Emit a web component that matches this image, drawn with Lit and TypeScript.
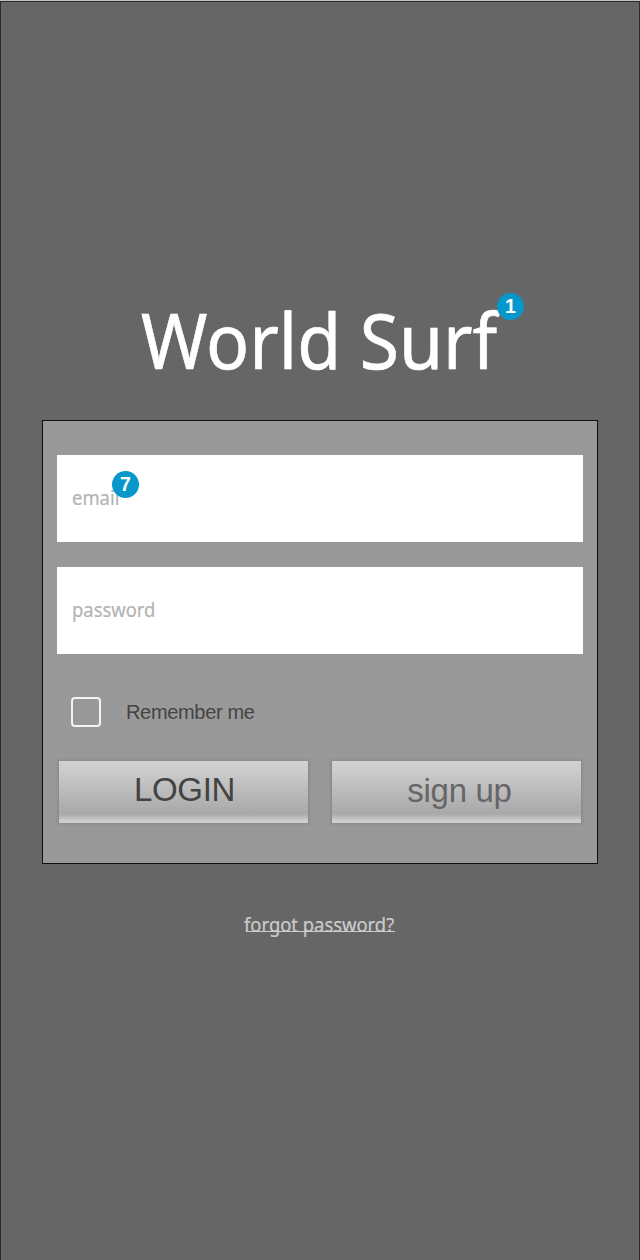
import { LitElement, html, css } from "lit";
import { customElement, property } from "lit/decorators.js";

@customElement("note-badge")
class NoteBadge extends LitElement {
  @property() label = "";
  static styles = css`
    :host {
      display: block;
      width: 27px;
      height: 27px;
      border-radius: 50%;
      background: #0697cb;
      color: #fff;
      font: bold 19.5px/27px "Liberation Sans", Arial, sans-serif;
      text-align: center;
    }
  `;
  render() {
    return html`${this.label}`;
  }
}

@customElement("app-root")
class AppRoot extends LitElement {
  static styles = css`
    :host {
      display: block;
      box-sizing: border-box;
      height: 1260px;
      overflow: hidden;
      border-top: 1px solid #bcc2bd;
      background: #666;
      font-family: "Noto Sans", sans-serif;
    }
    * {
      box-sizing: border-box;
    }
    .screen {
      height: 1259px;
      border: 1px solid #2c2c2c;
      border-bottom: 0;
      display: flex;
      flex-direction: column;
      align-items: center;
    }
    .title {
      position: relative;
      margin: 288px 0 0;
      width: 358px;
      height: 100px;
      color: #fff;
      font-size: 76px;
      font-weight: 400;
      line-height: 100px;
      white-space: nowrap;
      -webkit-text-stroke: 0.7px #fff;
    }
    .title-text {
      display: inline-block;
      transform-origin: 0 50%;
      transform: scaleX(0.94);
    }
    .title note-badge {
      position: absolute;
      left: 356px;
      top: 3px;
      -webkit-text-stroke: 0;
    }
    .panel {
      width: 556px;
      height: 444px;
      margin-top: 30px;
      padding: 34px 14px 0;
      border: 1px solid #111;
      background: #999;
    }
    .field {
      position: relative;
      width: 526px;
      height: 87px;
      margin-bottom: 25px;
      padding-left: 15px;
      background: #fff;
      color: #b3b3b3;
      font-size: 20px;
      line-height: 85px;
      -webkit-text-stroke: 0.2px;
    }
    .field note-badge {
      position: absolute;
      left: 55px;
      top: 15.5px;
      -webkit-text-stroke: 0;
    }
    .squeeze {
      display: inline-block;
      transform-origin: 0 50%;
      transform: scaleX(0.92);
    }
    .remember {
      display: flex;
      align-items: center;
      gap: 25px;
      height: 30px;
      margin: 43px 0 0 14px;
      color: #444;
      font: 20px/30px "Liberation Sans", Arial, sans-serif;
      letter-spacing: -0.33px;
    }
    .box {
      width: 30px;
      height: 30px;
      border: 2px solid #f4f4f4;
      border-radius: 4px;
    }
    .actions {
      display: flex;
      gap: 24px;
      margin: 34px 0 0 2px;
    }
    .button {
      width: 249px;
      height: 62px;
      padding: 0 0 4px 2px;
      border: 0;
      background: linear-gradient(#d2d2d2, #cdcdcd 12%, #a9a9a9 84%, #adadad 87%, #cbcbcb 95%, #d0d0d0);
      box-shadow: 0 0 3px 1px #858585;
      font: 33px/58px "Liberation Sans", Arial, sans-serif;
      letter-spacing: -0.3px;
      text-align: center;
      color: #434343;
    }
    .signup {
      padding: 0 0 3px 6px;
      color: #666;
    }
    .forgot {
      position: relative;
      margin-top: 46px;
      width: 152px;
      height: 30px;
      color: #ccc;
      font-size: 20px;
      line-height: 30px;
      white-space: nowrap;
      -webkit-text-stroke: 0.2px;
    }
    .forgot::after {
      content: "";
      position: absolute;
      left: 2px;
      top: 21px;
      width: 149px;
      height: 1px;
      background: #ccc;
    }
  `;

  render() {
    return html`
      <main class="screen">
        <h1 class="title">
          <span class="title-text">World Surf</span>
          <note-badge label="1"></note-badge>
        </h1>
        <section class="panel">
          <div class="field">
            <span class="squeeze">email</span>
            <note-badge label="7"></note-badge>
          </div>
          <div class="field"><span class="squeeze">password</span></div>
          <label class="remember"><span class="box"></span><span>Remember me</span></label>
          <div class="actions">
            <button class="button">LOGIN</button>
            <button class="button signup">sign up</button>
          </div>
        </section>
        <a class="forgot"><span class="squeeze">forgot password?</span></a>
      </main>
    `;
  }
}
